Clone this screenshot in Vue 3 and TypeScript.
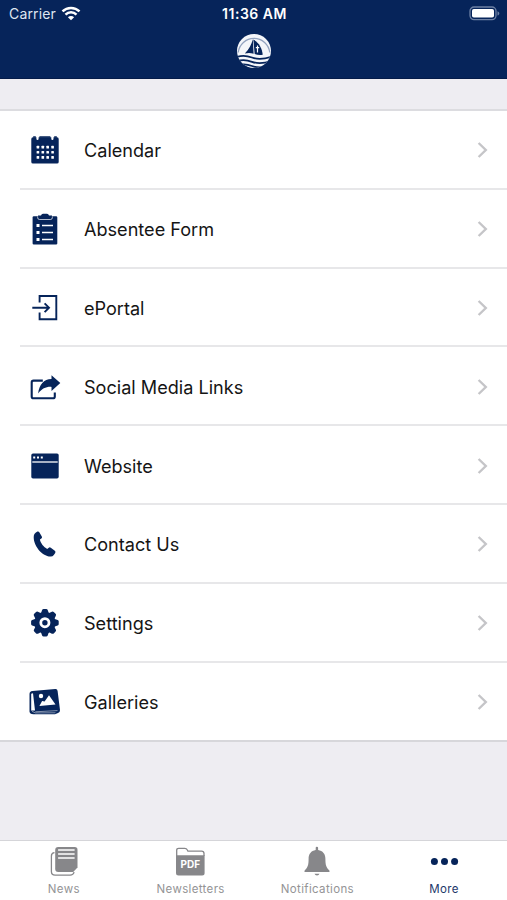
<script setup lang="ts">
interface MenuItem {
  id: string
  label: string
}

const menu: MenuItem[] = [
  { id: 'calendar', label: 'Calendar' },
  { id: 'form', label: 'Absentee Form' },
  { id: 'portal', label: 'ePortal' },
  { id: 'social', label: 'Social Media Links' },
  { id: 'website', label: 'Website' },
  { id: 'contact', label: 'Contact Us' },
  { id: 'settings', label: 'Settings' },
  { id: 'galleries', label: 'Galleries' },
]

const tabs: MenuItem[] = [
  { id: 'news', label: 'News' },
  { id: 'newsletters', label: 'Newsletters' },
  { id: 'notifications', label: 'Notifications' },
  { id: 'more', label: 'More' },
]

const activeTab = 'more'
const teeth = [0, 45, 90, 135, 180, 225, 270, 315]
const dotColumns = [8.9, 13.8, 18.7, 23.6]
const dotRows = [13.1, 18.3, 23.4]
</script>

<template>
  <div class="screen">
    <header class="header">
      <div class="status">
        <div class="carrier">
          <span>Carrier</span>
          <svg class="wifi" viewBox="0 0 20 15">
            <path d="M10 14.3 6.9 11.2a4.4 4.4 0 0 1 6.2 0z" fill="#fff" />
            <path d="M4.5 8.6a7.9 7.9 0 0 1 11 0M1.5 5.4a12.2 12.2 0 0 1 17 0" fill="none" stroke="#fff" stroke-width="2.5" />
          </svg>
        </div>
        <span class="time">11:36 AM</span>
        <div class="power">
          <svg class="battery" viewBox="0 0 31 15">
            <rect x="1" y="1" width="26" height="12.6" rx="4" fill="none" stroke="#6d80a4" stroke-width="1.3" />
            <rect x="3" y="3" width="22" height="8.6" rx="1.8" fill="#fff" />
            <path d="M28.500 5.200c2.400.8 2.400 3.600 0 4.400z" fill="#6d80a4" />
          </svg>
        </div>
      </div>
      <svg class="logo" viewBox="0 0 36 36">
        <defs>
          <clipPath id="disc"><circle cx="18" cy="18" r="17" /></clipPath>
        </defs>
        <circle cx="18" cy="18" r="17" fill="#f4f6fa" />
        <path d="M2.200 19.500A15.900 15.900 0 0 1 33.800 19.500" fill="none" stroke="#93a3bf" stroke-width="1.300" />
        <g clip-path="url(#disc)">
          <path d="M16.800 6.200C15.600 11.500 13 16.200 8.800 20.600c3.200-.8 6-.7 8.800.2z" fill="#06245a" />
          <path d="M17.300 6.500c5.500 3 8.900 8.500 9.400 15.300-3 .5-5.500.2-8-.8z" fill="#06245a" />
          <path d="M21.500 12.500v7M19.800 14.700h3.400" stroke="#fff" stroke-width="1.200" />
          <path d="M0 24.300c6-2.400 10.800-1.700 16 .2 6 2.200 12 1.800 20-1" fill="none" stroke="#06245a" stroke-width="1.800" />
          <path d="M0 28.600c6-2.500 10.800-1.800 16 .2 6 2.300 12 1.800 20-1" fill="none" stroke="#06245a" stroke-width="1.800" />
          <path d="M0 32.900c6-2.400 11-1.900 16 .1 6 2.300 12 1.800 20-1" fill="none" stroke="#06245a" stroke-width="1.800" />
        </g>
      </svg>
    </header>

    <main class="content">
      <ul class="menu">
        <li v-for="item in menu" :key="item.id" class="row">
          <svg class="icon" viewBox="0 0 32 32">
            <g v-if="item.id === 'calendar'">
              <path d="M4 3.200h3.400v1.600q0 1.200 1.100 1.200t1.100-1.200V3.200h12.700v1.600q0 1.200 1.100 1.200t1.100-1.200V3.200H28q1.700 0 1.700 1.700v23q0 1.600-1.700 1.600H4q-1.700 0-1.700-1.600v-23Q2.300 3.200 4 3.200z" />
              <path d="M4.200 2.200h2.600v1.500H4.200zM10.400 2.200h11v1.500h-11zM25.200 2.200h2.600v1.500h-2.600z" />
              <template v-for="y in dotRows" :key="y">
                <rect v-for="x in dotColumns" :key="x" :x="x - 1.3" :y="y - 1.3" width="2.6" height="2.6" rx=".5" fill="#fff" />
              </template>
            </g>
            <g v-else-if="item.id === 'form'">
              <path d="M4.800 3.300h22.300q1.200 0 1.200 1.200v26q0 1.100-1.200 1.100H4.800q-1.200 0-1.200-1.100v-26q0-1.200 1.200-1.200z" />
              <path d="M9 2.500h3Q12.500.8 14 .8h4q1.500 0 2 1.700h3v2.200q0 1.500-1.500 1.500h-11Q9 6.200 9 4.700z" />
              <path d="M8.700 3.500v1.300q0 1.700 1.800 1.700h11q1.800 0 1.800-1.700V3.500" fill="none" stroke="#fff" stroke-width=".7" />
              <path d="M7.500 11h3v3h-3zM7.500 18h3v3h-3zM7.500 25h3v3h-3z" fill="#fff" />
              <path d="M13 12.500h11M13 19.500h11M13 26.500h11" stroke="#fff" stroke-width="1.300" />
            </g>
            <g v-else-if="item.id === 'portal'" fill="none" stroke="#06245a" stroke-width="1.900">
              <path d="M10.600 10.500V4h16.700v23.200H10.600v-6.700M3.300 15.700h16.500M15.600 11.300l4.400 4.400-4.400 4.400" />
            </g>
            <g v-else-if="item.id === 'social'">
              <path d="M13.800 9.600H4.500Q2.700 9.600 2.700 11.400v14q0 1.900 1.900 1.900h19.200q2 0 2-1.900v-4" fill="none" stroke="#06245a" stroke-width="2.100" />
              <path d="M22.500 4.200 31.300 11.900 22.500 20v-4.100c-5.500-.3-9.400 1.700-13.400 6.600C10.300 13.400 14.700 8.300 22.500 8z" />
            </g>
            <g v-else-if="item.id === 'website'">
              <rect x="2.300" y="3.400" width="27.400" height="25" rx="1.700" />
              <path d="M3.300 12h25.400" stroke="#fff" stroke-width="1.300" />
              <path d="M4.200 6.600h2v2h-2zM8 6.600h2v2H8zM11.800 6.600h2v2h-2z" fill="#fff" />
            </g>
            <path
              v-else-if="item.id === 'contact'"
              d="M6.600 4.700 8.400 3.600q1.200-.5 1.900.7l2.500 4.100q.7 1.200-.4 2l-1.500 1.200c.7 3.700 3.800 7.600 7.300 9.300l1.600-1.200q1-.7 2 .1l4 2.900q1.200 1 .4 2.200l-1.400 2.100q-1.200 1.600-3.200 1.500C12.500 28.400 3.700 16.600 4.800 7.700q.3-2 1.800-3z"
            />
            <g v-else-if="item.id === 'settings'">
              <circle cx="15.900" cy="15.700" r="10.600" />
              <path
                v-for="angle in teeth"
                :key="angle"
                d="M11.900 6.500 13.100 3Q13.500 1.900 14.600 1.900h2.600q1.100 0 1.500 1.100l1.200 3.500z"
                :transform="`rotate(${angle} 15.900 15.700)`"
              />
              <circle cx="15.900" cy="15.700" r="4.100" fill="#06245a" stroke="#fff" stroke-width="2.800" />
            </g>
            <g v-else>
              <path d="M3.500 5.100 26.300 3Q28.400 2.800 28.600 5L31 24q.1 2.500-2 2.900L26 28.300H4.500Q.5 28 .5 25.500V8q0-2.500 3-2.900z" />
              <path d="M2.200 7.800 4 7.200l2 17.400-3.400-.1q-.4 0-.4 1z" fill="#fff" />
              <path d="M3 25.400l3.500 1.500 20-.1M6.300 25.800l22.200-1.200" fill="none" stroke="#fff" stroke-width=".5" />
              <circle cx="12" cy="10" r="2.200" fill="#fff" />
              <path d="m10.400 19.900 2.700-4.800 2.500.4 4.400-6.300 6.500 9.300z" fill="#fff" />
            </g>
          </svg>
          <div class="cell">
            <span class="label">{{ item.label }}</span>
            <svg class="chevron" viewBox="0 0 12 18">
              <path d="m1.600 2 7.200 7-7.200 7" />
            </svg>
          </div>
        </li>
      </ul>
    </main>

    <nav class="tabs">
      <div v-for="tab in tabs" :key="tab.id" class="tab" :class="{ active: tab.id === activeTab }">
        <svg class="tab-icon" viewBox="0 0 32 32">
          <g v-if="tab.id === 'news'" transform="translate(.7 0)">
            <path d="M6.800 6.600Q3.700 6.800 3.700 10v15.500q0 3.700 3.700 3.700h15q3.200 0 4-3" fill="none" stroke="#87878a" stroke-width="1.300" />
            <path d="M10.500 1H27q2.800 0 2.800 2.800v17.700l-4.300 4.400h-15q-3 0-3-3V4q0-3 3-3z" />
            <path d="M10.400 4h16.500M10.400 7.900h16.500M10.400 11.900h16.500" stroke="#fff" stroke-width="1.500" />
          </g>
          <g v-else-if="tab.id === 'newsletters'">
            <path d="M2.700 10V4.300q0-2 2-2h6q1.800 0 2.500 1.500l.7 1.400h13.700q2.400 0 2.400 2.300V10" fill="none" stroke="#87878a" stroke-width="1.300" />
            <path d="M2 9.200h28.600V27q0 2.500-2.500 2.500H4.500Q2 29.500 2 27z" />
            <text x="16.300" y="22.200" class="pdf">PDF</text>
          </g>
          <g v-else-if="tab.id === 'notifications'">
            <path d="M14.700 4V1.800q0-1 1.200-1t1.200 1V4c4.700.8 7.300 4 7.300 8.800 0 6.400.8 8.400 3.900 11.800.7.900.3 1.500-.8 1.500H4.500c-1.100 0-1.500-.6-.8-1.500 3.100-3.400 3.900-5.400 3.900-11.800 0-4.800 2.500-8 7.100-8.800z" />
            <path d="M13.500 27.700h5q-.6 1.800-2.500 1.800t-2.500-1.800z" />
          </g>
          <g v-else>
            <circle cx="6.400" cy="15.500" r="3.500" />
            <circle cx="16.500" cy="15.500" r="3.500" />
            <circle cx="26.600" cy="15.500" r="3.500" />
          </g>
        </svg>
        <span class="tab-label">{{ tab.label }}</span>
      </div>
    </nav>
  </div>
</template>

<style>
body {
  margin: 0;
}
</style>

<style scoped>
.screen {
  display: flex;
  flex-direction: column;
  height: 900px;
  overflow: hidden;
  background: #eeedf2;
  font-family: Inter, "Liberation Sans", sans-serif;
}

.header {
  box-sizing: border-box;
  display: flex;
  flex-direction: column;
  align-items: center;
  height: 79px;
  flex: none;
  background: #06245a;
  border-bottom: 1px solid #041b49;
  color: #fff;
}

.status {
  display: grid;
  grid-template-columns: 1fr auto 1fr;
  align-items: center;
  align-self: stretch;
  height: 27px;
  padding: 0 7px 0 9px;
}

.carrier {
  display: flex;
  align-items: center;
  gap: 5px;
  font-size: 14px;
  letter-spacing: 0.15px;
  color: #dfe6f1;
}

.wifi {
  width: 20px;
  height: 15px;
}

.time {
  font-size: 14px;
  font-weight: 600;
  letter-spacing: 0.5px;
}

.power {
  display: flex;
  justify-content: flex-end;
}

.battery {
  width: 31px;
  height: 15px;
}

.logo {
  width: 36px;
  height: 36px;
  margin-top: 6px;
}

.content {
  flex: 1;
  padding-top: 30px;
}

.menu {
  margin: 0;
  padding: 0;
  list-style: none;
  background: #fff;
  border-top: 2px solid #dcdce0;
}

.row {
  box-sizing: border-box;
  display: flex;
  align-items: center;
  height: 78.8px;
  padding-left: 20px;
  background: linear-gradient(#e7e7e9, #e7e7e9) 20px 100% / 100% 2px no-repeat;
}

.row:last-child {
  height: 79.6px;
  background: linear-gradient(#d7d7db, #d7d7db) 0 100% / 100% 2px no-repeat;
}

.icon {
  width: 32px;
  height: 32px;
  flex: none;
  margin-left: 9px;
  fill: #06245a;
}

.cell {
  flex: 1;
  display: flex;
  align-items: center;
  justify-content: space-between;
  padding: 0 18px 0 23px;
}

.label {
  font-size: 18.1px;
  line-height: 24px;
  color: #151515;
}

.chevron {
  width: 12px;
  height: 18px;
  fill: none;
  stroke: #c5c5c8;
  stroke-width: 2.4;
}

.tabs {
  box-sizing: border-box;
  display: grid;
  grid-template-columns: repeat(4, 1fr);
  height: 60px;
  flex: none;
  background: #fff;
  border-top: 1px solid #d5d5d9;
}

.tab {
  display: flex;
  flex-direction: column;
  align-items: center;
  padding-top: 5px;
  color: #949496;
  fill: #87878a;
}

.tab.active {
  color: #1c376a;
  fill: #06245a;
}

.tab-icon {
  width: 32px;
  height: 32px;
}

.tab-label {
  margin-top: 3px;
  padding-left: 1px;
  font-size: 11.5px;
  line-height: 16px;
  letter-spacing: 0.35px;
}

.pdf {
  fill: #fff;
  font-size: 10px;
  font-weight: 700;
  text-anchor: middle;
}
</style>
